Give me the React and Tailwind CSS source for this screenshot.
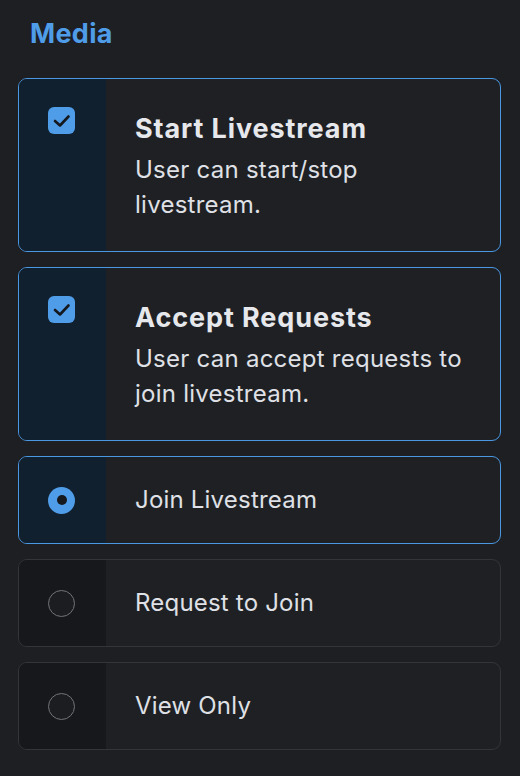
const options = [
  { type: "check", title: "Start Livestream", desc: "User can start/stop livestream.", on: true },
  { type: "check", title: "Accept Requests", desc: "User can accept requests to join livestream.", on: true },
  { type: "radio", title: "Join Livestream", on: true },
  { type: "radio", title: "Request to Join", on: false },
  { type: "radio", title: "View Only", on: false },
];

function CheckBox() {
  return (
    <svg width="27" height="27" viewBox="0 0 27 27" fill="none">
      <rect width="27" height="27" rx="6" fill="#4f9de8" />
      <path d="M7 14l5 4.5 8.5-9" stroke="#15181d" strokeWidth="2.6" strokeLinecap="round" strokeLinejoin="round" />
    </svg>
  );
}

function Radio({ on }) {
  if (on) {
    return (
      <div className="w-[27px] h-[27px] rounded-full bg-[#4f9de8] flex items-center justify-center">
        <div className="w-[10px] h-[10px] rounded-full bg-[#15181d]" />
      </div>
    );
  }
  return <div className="w-[27px] h-[27px] rounded-full border border-[#727479] bg-[#1c1d21]" />;
}

function OptionCard({ opt }) {
  const border = opt.on ? "border-[#4a97e2]" : "border-[#34353a]";
  const side = opt.on ? "bg-[#11202f]" : "bg-[#17181b]";
  if (opt.type === "check") {
    return (
      <div className={`flex rounded-[9px] border overflow-hidden bg-[#1f2024] ${border}`}>
        <div className={`w-[87px] shrink-0 flex justify-center pt-[28px] pr-[2px] ${side}`}>
          <div className="h-[27px]">
            <CheckBox />
          </div>
        </div>
        <div className="flex-1 pl-[29px] pr-[26px] pt-[33px] pb-[29px]">
          <div className="text-[27px] leading-[34px] font-bold tracking-[0.9px] text-[#e6e8ec]">{opt.title}</div>
          <div className="text-[24px] leading-[35px] tracking-[0.25px] text-[#dfe1e6] mt-[6px]">{opt.desc}</div>
        </div>
      </div>
    );
  }
  return (
    <div className={`flex rounded-[9px] border overflow-hidden bg-[#1f2024] h-[88px] ${border}`}>
      <div className={`w-[87px] shrink-0 flex items-center justify-center pr-[2px] ${side}`}>
        <Radio on={opt.on} />
      </div>
      <div className="flex-1 pl-[29px] flex items-center text-[24px] tracking-[0.2px] text-[#dfe1e6]">{opt.title}</div>
    </div>
  );
}

export default function App() {
  return (
    <div className="min-h-[776px] w-[520px] bg-[#1e1f23] px-[18px] pt-[16px] font-['Inter',sans-serif]">
      <h2 className="pl-[12px] text-[27px] leading-[36px] font-bold tracking-[0.3px] text-[#4f9de8]">Media</h2>
      <div className="mt-[26px] flex flex-col gap-[15px] pr-[1px]">
        {options.map((o) => (
          <OptionCard key={o.title} opt={o} />
        ))}
      </div>
    </div>
  );
}
